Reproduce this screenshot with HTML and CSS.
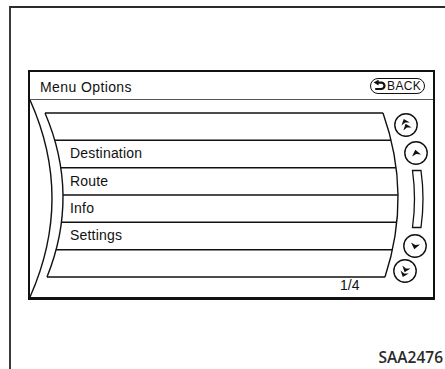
FILE: index.html
```html
<!DOCTYPE html>
<html lang="en">
<head>
    <meta charset="UTF-8">
    <title>Menu Options</title>
    <link rel="stylesheet" href="styles.css">
</head>
<body>
    <div class="figure">
        <div class="screen">
            <div class="screen-head">
                <span class="title">Menu Options</span>
                <span class="back-btn">
                    <svg width="13" height="11" viewBox="0 0 13 11">
                        <path d="M5 2.6 H8.3 A3.2 3.2 0 0 1 8.3 9 H2.2" fill="none" stroke="#111" stroke-width="2.2"/>
                        <polygon points="0.6,2.6 5.6,-0.4 5.6,5.6" fill="#111"/>
                    </svg>
                    BACK
                </span>
            </div>

            <div class="screen-body">
                <!-- curved frame, row lines and scroll controls -->
                <svg class="lines" width="403" height="197" viewBox="0 0 403 197">
                    <g fill="none" stroke="#111" stroke-width="1.4">
                        <path d="M0 0 Q44 98 0 197"/>
                        <path d="M15 13 Q50 95 17 177"/>
                        <path d="M353 13 Q382 95 355 177"/>
                        <line x1="15" y1="13" x2="353" y2="13"/>
                        <line x1="24.8" y1="40.3" x2="361.1" y2="40.3"/>
                        <line x1="30.8" y1="67.7" x2="366.1" y2="67.7"/>
                        <line x1="33" y1="95" x2="368" y2="95"/>
                        <line x1="31.4" y1="122.3" x2="366.8" y2="122.3"/>
                        <line x1="26.1" y1="149.7" x2="362.4" y2="149.7"/>
                        <line x1="17" y1="177" x2="355" y2="177"/>

                        <circle cx="376" cy="25" r="11.2"/>
                        <circle cx="386" cy="53" r="11.2"/>
                        <circle cx="385" cy="146" r="11.2"/>
                        <circle cx="375" cy="171" r="11.2"/>
                        <path d="M382.5 70.5 Q386.5 99 382.5 127.5 L391 127.5 Q395 99 391 70.5 Z" stroke-width="1.3"/>
                    </g>
                    <g fill="#111">
                        <g transform="translate(376 25) rotate(-20)">
                            <path d="M0 -6.5 L4.4 -1 L0 -2.6 L-4.4 -1 Z"/>
                            <path d="M0 -1.2 L4.4 4.3 L0 2.7 L-4.4 4.3 Z"/>
                        </g>
                        <g transform="translate(386 53) rotate(-12)">
                            <path d="M0 -3.4 L4.6 2.6 L0 1 L-4.6 2.6 Z"/>
                        </g>
                        <g transform="translate(385 146) rotate(12)">
                            <path d="M0 3.4 L4.6 -2.6 L0 -1 L-4.6 -2.6 Z"/>
                        </g>
                        <g transform="translate(375 171) rotate(20)">
                            <path d="M0 6.5 L4.4 1 L0 2.6 L-4.4 1 Z"/>
                            <path d="M0 1.2 L4.4 -4.3 L0 -2.7 L-4.4 -4.3 Z"/>
                        </g>
                    </g>
                </svg>

                <ul class="menu">
                    <li></li>
                    <li>Destination</li>
                    <li>Route</li>
                    <li>Info</li>
                    <li>Settings</li>
                    <li></li>
                </ul>
                <div class="page-num">1/4</div>
            </div>
        </div>

        <div class="caption">SAA2476</div>
    </div>
</body>
</html>
```

FILE: styles.css
```css
body {
    margin: 0;
    background-color: #fff;
    font-family: "Liberation Sans", Arial, sans-serif;
    color: #111;
}

.figure {
    margin: 6px 0 0 9px;
    height: 363px;
    box-sizing: border-box;
    border-top: 2px solid #2b2b2b;
    border-left: 2px solid #3a3a3a;
    padding: 62px 0 0 17px;
}

.screen {
    width: 407px;
    height: 230px;
    box-sizing: border-box;
    border: 2px solid #111;
    border-bottom-width: 3px;
}

.screen-head {
    height: 27px;
    border-bottom: 1px solid #555;
    display: flex;
    align-items: center;
    justify-content: space-between;
    padding: 0 8px 0 10px;
}

.title {
    font-size: 14px;
    letter-spacing: 0.4px;
    padding-top: 2px;
}

.back-btn {
    display: flex;
    align-items: center;
    gap: 1px;
    height: 16px;
    box-sizing: border-box;
    border: 1.5px solid #111;
    border-radius: 8px;
    padding: 0 3px 0 2px;
    font-size: 12px;
    letter-spacing: 0.3px;
}

.screen-body {
    position: relative;
    height: 197px;
}

.lines {
    position: absolute;
    left: 0;
    top: 0;
}

.menu {
    list-style: none;
    margin: 0 0 0 40px;
    padding: 13px 0 0;
}

.menu li {
    height: 27.33px;
    line-height: 27px;
    font-size: 14px;
    letter-spacing: 0.2px;
}

.page-num {
    margin-left: 310px;
    font-size: 14px;
    line-height: 16px;
}

.caption {
    margin-top: 47px;
    padding-right: 2px;
    text-align: right;
    font-family: "Open Sans", sans-serif;
    font-weight: 600;
    font-size: 15.5px;
    line-height: 20px;
    color: #2a2a2a;
}
```
